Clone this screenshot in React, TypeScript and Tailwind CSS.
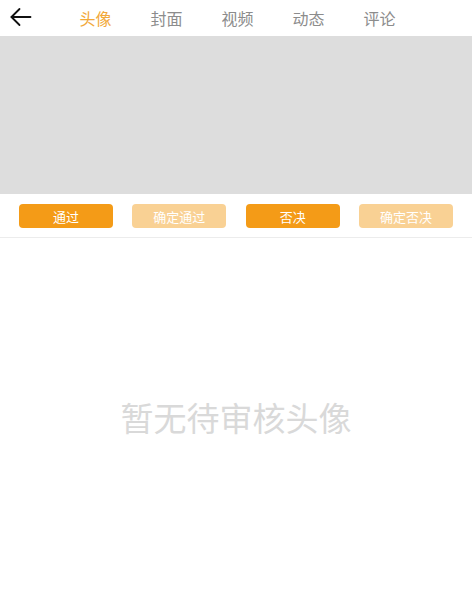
const TABS = ['头像', '封面', '视频', '动态', '评论'];

// Review action buttons: solid ones are enabled, pale ones are disabled
const ACTIONS = [
  { label: '通过', enabled: true },
  { label: '确定通过', enabled: false },
  { label: '否决', enabled: true },
  { label: '确定否决', enabled: false },
];

function BackArrow() {
  return (
    <svg width="22" height="20" viewBox="0 0 22 20" fill="none" stroke="#111" strokeWidth="1.8" strokeLinecap="round" strokeLinejoin="round">
      <path d="M20.5 10H1.5" />
      <path d="M9.5 2 1.5 10l8 8" />
    </svg>
  );
}

export default function App() {
  return (
    <div
      className="flex h-screen flex-col bg-white"
      style={{ fontFamily: '"Noto Sans CJK SC", "Noto Sans", sans-serif' }}
    >
      {/* Top tab bar */}
      <div className="flex h-[36px] items-center">
        <div className="flex w-[60px] items-center pl-[10px] pb-[3px]">
          <BackArrow />
        </div>
        {TABS.map((tab, i) => (
          <div
            key={tab}
            className={`w-[71px] text-center text-[16px] leading-none ${
              i === 0 ? 'text-[#f2a93b]' : 'text-[#8c8c8c]'
            }`}
          >
            {tab}
          </div>
        ))}
      </div>

      {/* Avatar preview area */}
      <div className="h-[158px] bg-[#dddddd]" />

      {/* Actions */}
      <div className="flex justify-between border-b border-[#ececec] px-[19px] pt-[10px] pb-[9px]">
        {ACTIONS.map((a) => (
          <button
            key={a.label}
            className={`flex h-[24px] w-[94px] items-center justify-center rounded-[4px] text-[13px] leading-none text-white ${
              a.enabled ? 'bg-[#f49b17]' : 'bg-[#f9d194]'
            }`}
          >
            {a.label}
          </button>
        ))}
      </div>

      {/* Empty state */}
      <div className="flex flex-1 items-center justify-center pb-[2px]">
        <span className="text-[33px] leading-none text-[#d9d9d9]">暂无待审核头像</span>
      </div>
    </div>
  );
}
